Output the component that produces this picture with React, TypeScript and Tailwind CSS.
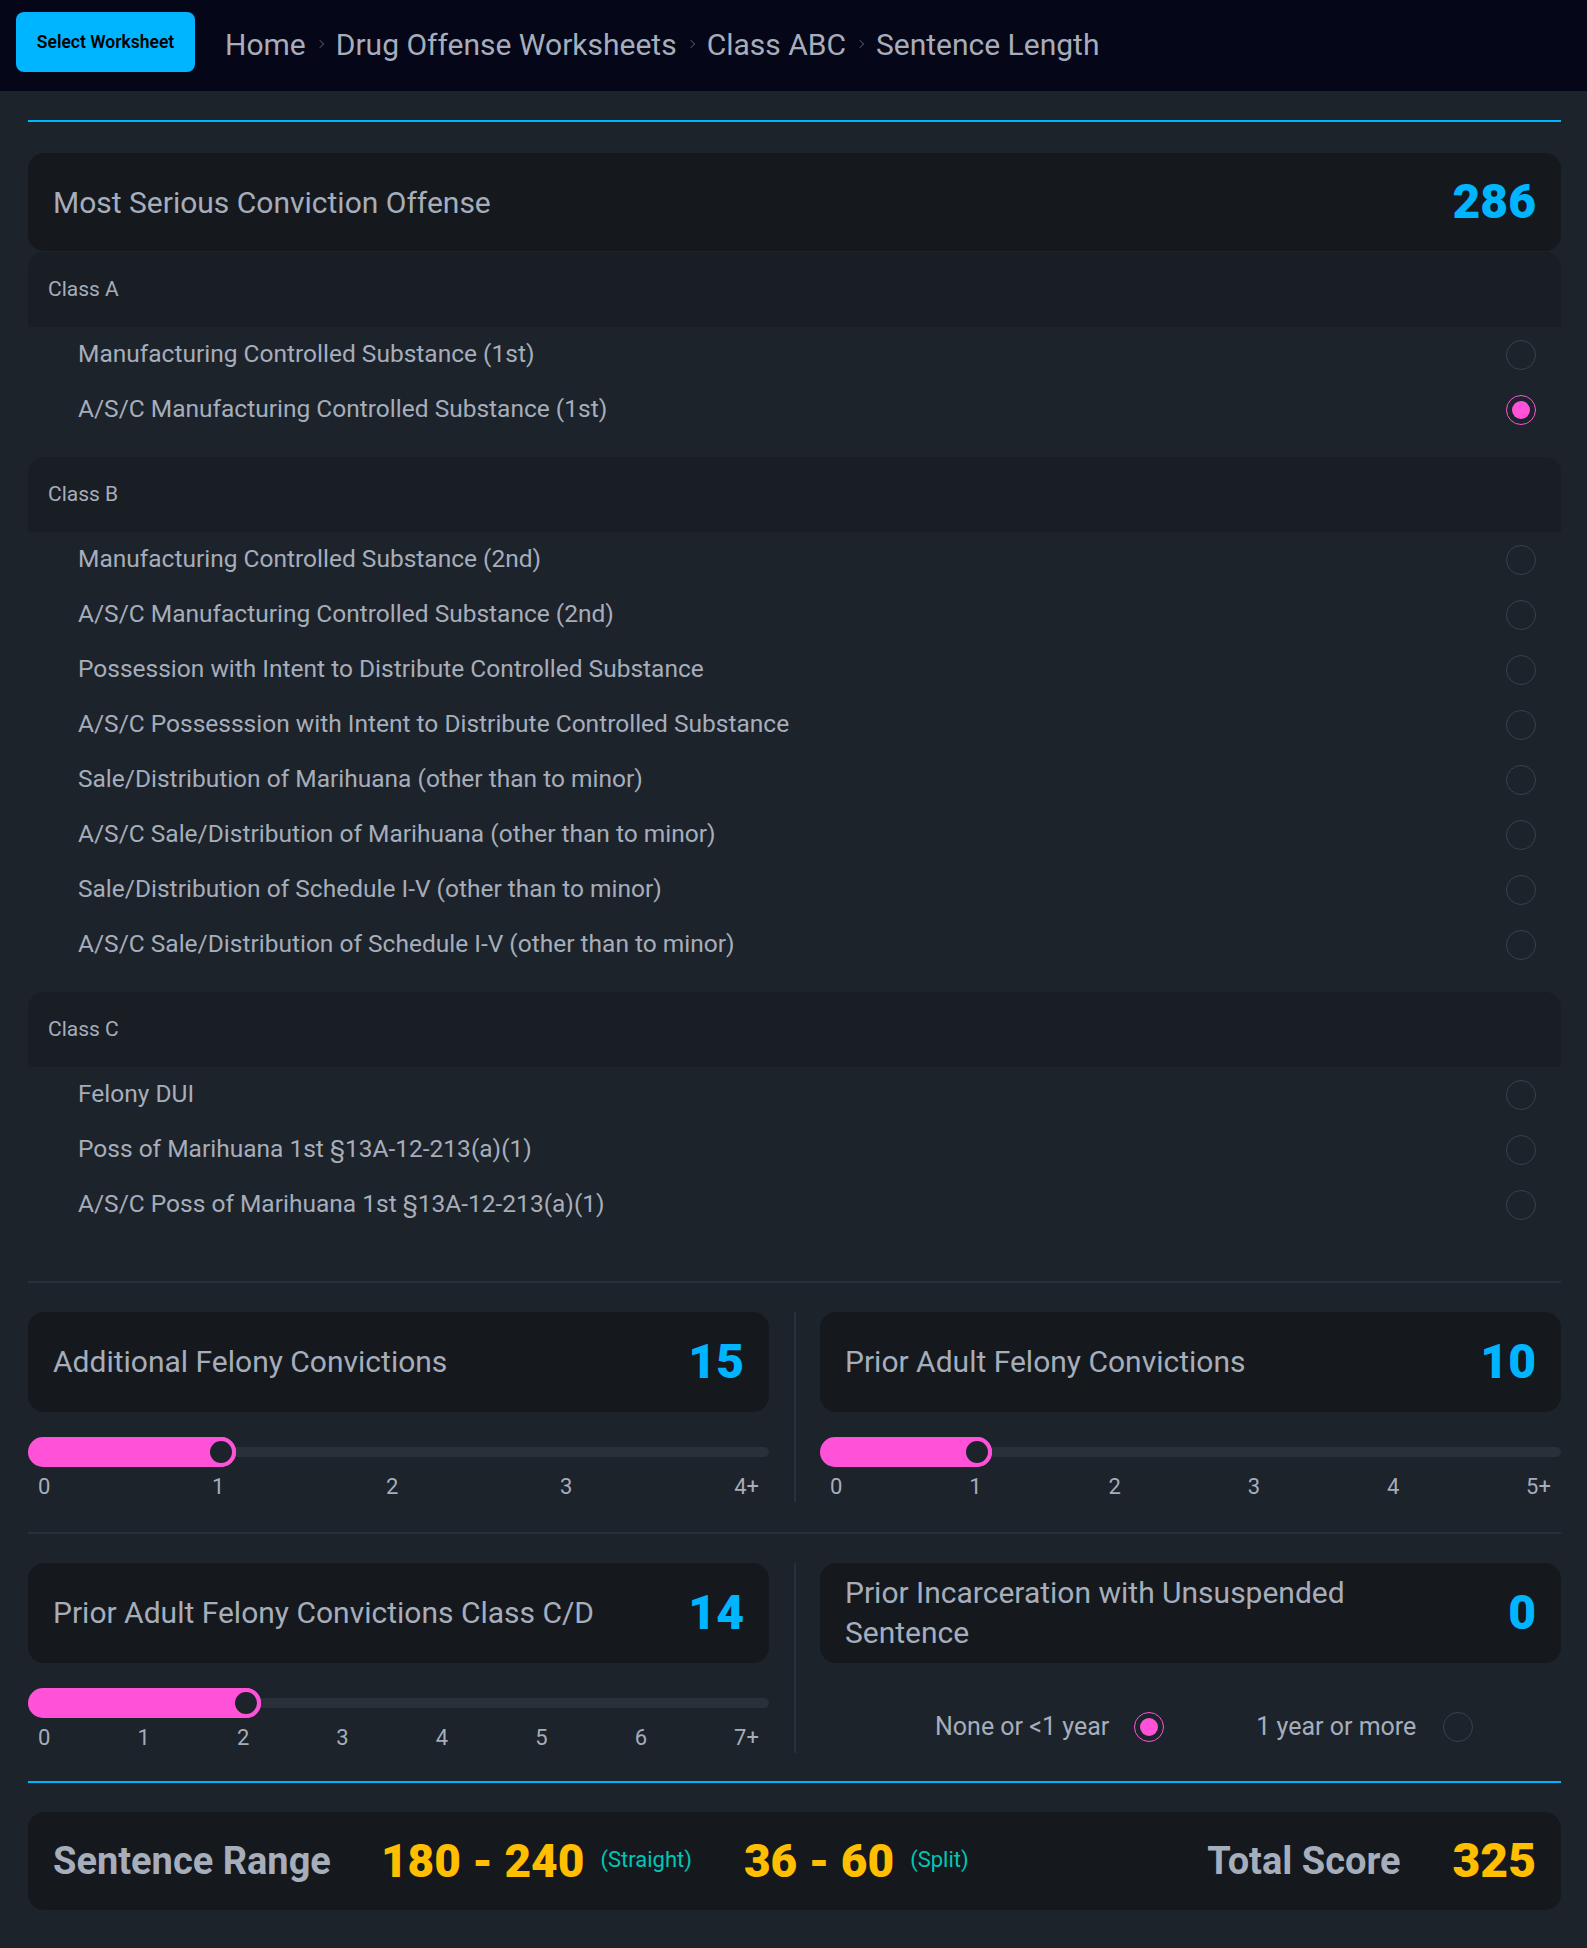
import { Fragment } from 'react';

type OffenseClass = {
  name: string
  offenses: string[]
  selected?: number
}

const offenseClasses: OffenseClass[] = [
  {
    name: 'Class A',
    offenses: [
      'Manufacturing Controlled Substance (1st)',
      'A/S/C Manufacturing Controlled Substance (1st)',
    ],
    selected: 1,
  },
  {
    name: 'Class B',
    offenses: [
      'Manufacturing Controlled Substance (2nd)',
      'A/S/C Manufacturing Controlled Substance (2nd)',
      'Possession with Intent to Distribute Controlled Substance',
      'A/S/C Possesssion with Intent to Distribute Controlled Substance',
      'Sale/Distribution of Marihuana (other than to minor)',
      'A/S/C Sale/Distribution of Marihuana (other than to minor)',
      'Sale/Distribution of Schedule I-V (other than to minor)',
      'A/S/C Sale/Distribution of Schedule I-V (other than to minor)',
    ],
  },
  {
    name: 'Class C',
    offenses: [
      'Felony DUI',
      'Poss of Marihuana 1st §13A-12-213(a)(1)',
      'A/S/C Poss of Marihuana 1st §13A-12-213(a)(1)',
    ],
  },
]

function Radio({ checked = false }: { checked?: boolean }) {
  return (
    <span
      className={
        checked
          ? 'flex items-center justify-center w-[30px] h-[30px] rounded-full border border-[#ff52d9]'
          : 'flex items-center justify-center w-[30px] h-[30px] rounded-full border border-[#3a414b]'
      }
    >
      {checked && <span className="w-[18px] h-[18px] rounded-full bg-[#ff52d9]" />}
    </span>
  )
}

function ScoreCard({ title, score, twoLine = false }: { title: string; score: number; twoLine?: boolean }) {
  return (
    <div className="h-[100px] rounded-2xl bg-[#15191e] flex items-center justify-between px-[25px]">
      <span className={twoLine ? 'text-[30px] leading-[40px] max-w-[540px]' : 'text-[30px] leading-[40px]'}>{title}</span>
      <span className="text-[48px] leading-none font-black text-[#00b5ff]">{score}</span>
    </div>
  )
}

function Slider({ value, labels }: { value: number; labels: string[] }) {
  const frac = value / (labels.length - 1)
  return (
    <div className="mt-[25px]">
      <div className="relative h-[30px] flex items-center">
        <div className="w-full h-[10px] rounded-full bg-[#2a3039]" />
        <div
          className="absolute left-0 top-0 h-[30px] rounded-full bg-[#ff52d9]"
          style={{ width: `calc(${frac} * (100% - 30px) + 30px)` }}
        >
          <div className="absolute right-0 top-0 w-[30px] h-[30px] rounded-full bg-[#1d232a] border-4 border-[#ff52d9]" />
        </div>
      </div>
      <div className="mt-[5px] flex justify-between px-[10px] text-[22px] leading-[30px]">
        {labels.map((l) => (
          <span key={l}>{l}</span>
        ))}
      </div>
    </div>
  )
}

function Divider() {
  return <div className="w-[51px] flex justify-center self-stretch"><div className="w-[2px] bg-[#2a3039]" /></div>
}

export default function App() {
  const crumbs = ['Home', 'Drug Offense Worksheets', 'Class ABC', 'Sentence Length']

  return (
    <div className="min-h-screen bg-[#1d232a] text-[#a6adbb] font-['Segoe_UI',Roboto,sans-serif]">

      {/* Top bar */}
      <div className="h-[91px] bg-[#050617] flex items-start pt-3 pl-4">
        <button className="h-[60px] w-[179px] rounded-lg bg-[#00b5ff] text-black text-[17.5px] font-semibold">Select Worksheet</button>
        <div className="ml-[30px] mt-[2px] h-[60px] flex items-center text-[30px]">
          {crumbs.map((c, i) => (
            <Fragment key={c}>
              {i > 0 && <span className="ml-[11px] mr-[13px] w-[6px] h-[6px] border-t border-r border-[#a6adbb] opacity-40 rotate-45" />}
              <span>{c}</span>
            </Fragment>
          ))}
        </div>
      </div>

      {/* Content */}
      <div className="pl-[28px] pr-[26px] pb-[37px]">
        <div className="mt-[29px] h-[2px] bg-[#00b5ff]" />

        {/* Most serious offense */}
        <div className="mt-[31px] h-[98px] rounded-2xl bg-[#15191e] flex items-center justify-between px-[25px]">
          <span className="text-[30px]">Most Serious Conviction Offense</span>
          <span className="text-[48px] leading-none font-black text-[#00b5ff]">286</span>
        </div>

        <div className="mt-px">
          {offenseClasses.map((oc) => (
            <div key={oc.name} className="pb-5">
              <div className="h-[75px] rounded-t-2xl bg-[#191e24] flex items-center px-[20px] text-[21px]">{oc.name}</div>
              {oc.offenses.map((o, i) => (
                <div key={o} className="h-[55px] flex items-center justify-between pl-[50px] pr-[25px] text-[24.5px]">
                  <span>{o}</span>
                  <Radio checked={oc.selected === i} />
                </div>
              ))}
            </div>
          ))}
        </div>

        <div className="mt-[29px] h-[2px] bg-[#2a3039]" />

        {/* Row 1 */}
        <div className="flex pt-[29px] pb-[30px]">
          <div className="flex-1">
            <ScoreCard title="Additional Felony Convictions" score={15} />
            <Slider value={1} labels={['0', '1', '2', '3', '4+']} />
          </div>
          <Divider />
          <div className="flex-1">
            <ScoreCard title="Prior Adult Felony Convictions" score={10} />
            <Slider value={1} labels={['0', '1', '2', '3', '4', '5+']} />
          </div>
        </div>

        <div className="h-[2px] bg-[#2a3039]" />

        {/* Row 2 */}
        <div className="flex pt-[29px] pb-[28px]">
          <div className="flex-1">
            <ScoreCard title="Prior Adult Felony Convictions Class C/D" score={14} />
            <Slider value={2} labels={['0', '1', '2', '3', '4', '5', '6', '7+']} />
          </div>
          <Divider />
          <div className="flex-1">
            <ScoreCard title="Prior Incarceration with Unsuspended Sentence" score={0} twoLine />
            <div className="mt-[49px] h-[30px] flex items-center pl-[115px] text-[25px]">
              <span>None or &lt;1 year</span>
              <span className="ml-[25px]"><Radio checked /></span>
              <span className="ml-[92px]">1 year or more</span>
              <span className="ml-[27px]"><Radio /></span>
            </div>
          </div>
        </div>

        <div className="h-[2px] bg-[#00b5ff]" />

        {/* Totals */}
        <div className="mt-[29px] h-[98px] rounded-2xl bg-[#15191e] flex items-center justify-between px-[25px]">
          <div className="flex items-center">
            <span className="text-[38px] font-bold">Sentence Range</span>
            <span className="ml-[50px] text-[46px] leading-none font-black text-[#ffbe00]">180 - 240</span>
            <span className="ml-[16px] mb-[4px] text-[22px] text-[#00c7b5]">(Straight)</span>
            <span className="ml-[52px] text-[46px] leading-none font-black text-[#ffbe00]">36 - 60</span>
            <span className="ml-[16px] mb-[4px] text-[22px] text-[#00c7b5]">(Split)</span>
          </div>
          <div className="flex items-center">
            <span className="text-[38px] font-bold">Total Score</span>
            <span className="ml-[52px] text-[48px] leading-none font-black text-[#ffbe00]">325</span>
          </div>
        </div>
      </div>
    </div>
  )
}
